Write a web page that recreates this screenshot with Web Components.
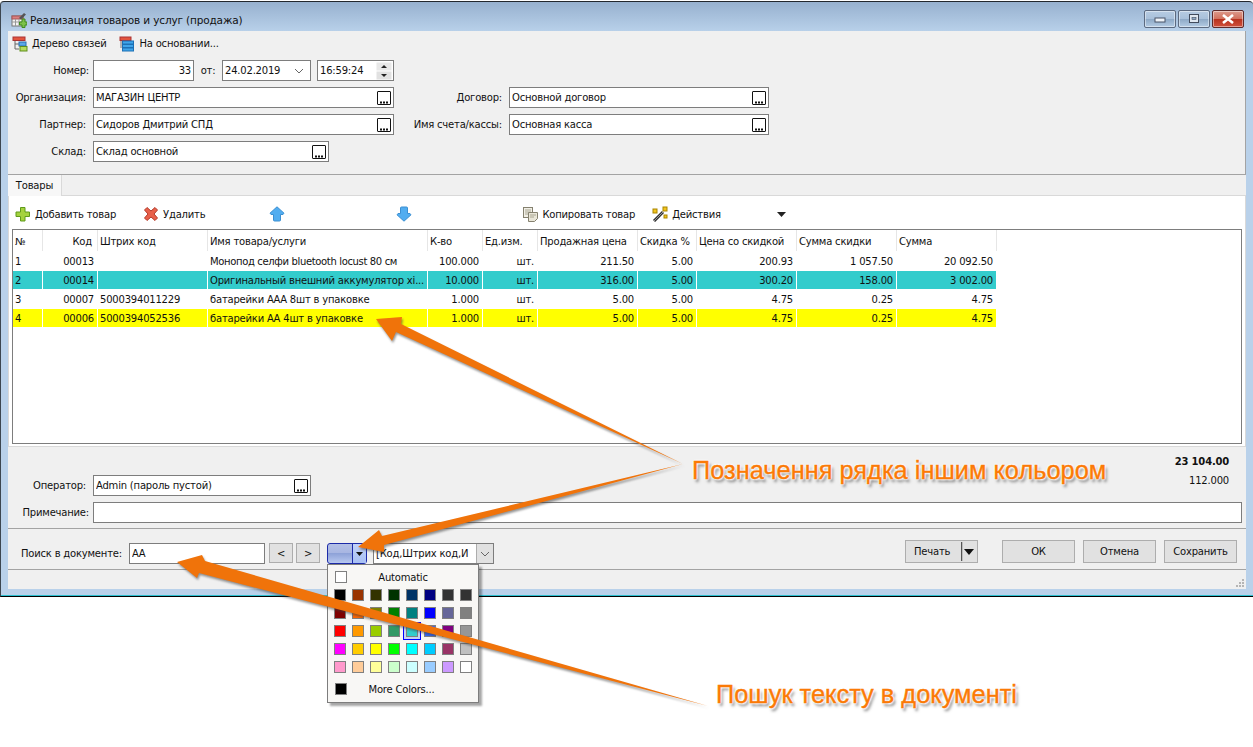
<!DOCTYPE html>
<html lang="ru">
<head>
<meta charset="utf-8">
<title>Реализация товаров и услуг</title>
<style>
	html, body { margin: 0; background: #fff; }
	body { font: 10px "DejaVu Sans", sans-serif; letter-spacing: -.2px; color: #111; }
</style>
</head>
<body>
<app-window></app-window>
<script>
const ICONS = {
	doc: `<rect x="1" y="4" width="11" height="10" fill="#f4f4f4" stroke="#777"/><rect x="1" y="4" width="11" height="3" fill="#d98080" stroke="#a55"/><path d="M1 10h11M4.500 7v7M8 7v7" stroke="#999"/><path d="M8 6l5-5 2 1.500-5 5z" fill="#555"/><path d="M11 7h3v3h2v3h-2v2.500h-3V13H8.500v-3H11z" fill="#7cc04a" stroke="#3f8a1c"/>`,
	tree: `<rect x="1" y="1" width="12" height="3.500" fill="#e2543e" stroke="#a33"/><path d="M3 5v8h4M3 8h4" stroke="#666" fill="none"/><rect x="7" y="6" width="7" height="4" fill="#5ba8e6" stroke="#2a6fb0"/><rect x="8" y="10.500" width="7" height="4.500" fill="#b6dc5c" stroke="#5f8e1d"/>`,
	stack: `<rect x="1" y="1" width="11" height="3.500" fill="#e2543e" stroke="#a33"/><path d="M2 5v7" stroke="#777"/><rect x="3.500" y="5" width="11" height="3" fill="#3fa5ea" stroke="#1d70b5"/><rect x="3.500" y="8.500" width="11" height="3" fill="#3fa5ea" stroke="#1d70b5"/><rect x="3.500" y="12" width="11" height="3" fill="#3fa5ea" stroke="#1d70b5"/>`,
	plus: `<path d="M5.500 1.500h4.500v4.500h4.500v4.500H10V15H5.500v-4.500H1V6h4.500z" fill="#a4d23e" stroke="#5f9a1a"/>`,
	cross: `<path d="M1.500 4L4 1.500 8 5l4-3.500L14.500 4 11 8l3.500 4-2.500 2.500L8 11l-4 3.500L1.500 12 5 8z" fill="#e8604a" stroke="#b33a2a"/>`,
	up: `<path d="M8 .8L15 7.200 14 8.500H11.500V14a1 1 0 0 1-1 1h-5a1 1 0 0 1-1-1V8.500H2L1 7.200z" fill="#52adf0" stroke="#3b8fd2"/>`,
	down: `<path d="M8 15.200L15 8.800 14 7.500H11.500V2a1 1 0 0 0-1-1h-5a1 1 0 0 0-1 1V7.500H2L1 8.800z" fill="#52adf0" stroke="#3b8fd2"/>`,
	copy: `<rect x="1.500" y="1.500" width="9" height="10" fill="#f1efe6" stroke="#85816f"/><path d="M3 4h6M3 6h6M3 8h6" stroke="#a9a692"/><path d="M6.500 6.500h9v6l-3 3h-6z" fill="#e9e6d8" stroke="#85816f"/><path d="M8 9h6M8 11h4" stroke="#a9a692"/>`,
	wand: `<path d="M2 15L11 6" stroke="#333" stroke-width="3"/><path d="M2 15L11 6" stroke="#999" stroke-width="1"/><rect x="1" y="3" width="4" height="4" fill="#f3c41c" stroke="#a98500"/><rect x="11" y="1" width="4" height="4" fill="#f3c41c" stroke="#a98500"/><rect x="12" y="9" width="3" height="3" fill="#f3c41c" stroke="#a98500"/>`
};

class XIcon extends HTMLElement {
	connectedCallback() {
		this.attachShadow({mode:'open'});
		this.shadowRoot.innerHTML = `
			<style>
			:host { display: block; width: 16px; height: 16px; flex: none; }
			svg { display: block; }
			</style>
			<svg width="16" height="16" viewBox="0 0 16 16">${ICONS[this.getAttribute('name')]}</svg>
		`;
	}
}

class TitleBar extends HTMLElement {
	constructor() {
		super();
		this.attachShadow({mode:'open'});
		this.shadowRoot.innerHTML = `
			<style>
			:host {
				display: flex;
				align-items: center;
				height: 29px;
				padding-left: 10px;
				font-size: 10.500px;
				letter-spacing: -.15px;
				color: #111;
			}
			x-icon { margin: 6px 3px 0 0; }
			.text { flex: 1; padding-top: 6px; }
			.btns { display: flex; gap: 2px; margin: 0 9px 0 0; align-self: flex-start; padding-top: 8px; }
			.btn {
				width: 30px;
				height: 16px;
				border: 1px solid #5c6a80;
				border-radius: 2px;
				background: linear-gradient(#b6cbe2 0, #a8c0da 50%, #8ea9c6 52%, #b4cce4 100%);
				box-shadow: inset 0 0 0 1px rgba(255,255,255,.45);
				display: flex;
				align-items: center;
				justify-content: center;
			}
			.btn.close {
				background: linear-gradient(#dc9a8c 0, #d2705c 50%, #b8321e 52%, #d0503c 100%);
				border-color: #5e2a2a;
			}
			</style>
			<x-icon name="doc"></x-icon>
			<span class="text">Реализация товаров и услуг (продажа)</span>
			<div class="btns">
				<div class="btn"><svg width="12" height="8"><rect x="1" y="3" width="10" height="4" fill="#eef3f8" stroke="#4a5568"/></svg></div>
				<div class="btn"><svg width="12" height="10"><rect x="1.500" y="0.500" width="9" height="8" fill="#dfe7f0" stroke="#414b5c"/><rect x="4" y="3.500" width="4" height="2" fill="#8ea9c6" stroke="#414b5c" stroke-width=".6"/></svg></div>
				<div class="btn close"><svg width="12" height="10"><path d="M1 1l10 8M11 1L1 9" stroke="#fff" stroke-width="2.600"/></svg></div>
			</div>
		`;
	}
}

class ToolBtn extends HTMLElement {
	constructor() {
		super();
		this.attachShadow({mode:'open'});
		this.shadowRoot.innerHTML = `
			<style>
			:host { display: inline-flex; align-items: center; gap: 4px; height: 17px; white-space: nowrap; }
			</style>
			<slot name="icon"></slot><slot></slot>
		`;
	}
}

class FieldBox extends HTMLElement {
	constructor() {
		super();
		this.attachShadow({mode:'open'});
		this.shadowRoot.innerHTML = `
			<style>
			:host {
				display: flex;
				align-items: center;
				box-sizing: border-box;
				height: 21px;
				background: #fff;
				border: 1px solid #7d7d7d;
				padding: 0 2px;
				overflow: hidden;
				white-space: nowrap;
				flex: none;
			}
			.text { flex: 1; overflow: hidden; }
			:host([right]) .text { text-align: right; }
			.dots {
				display: none;
				width: 12px;
				height: 12px;
				border: 1px solid #111;
				border-radius: 1px;
				position: relative;
			}
			:host([dots]) .dots { display: block; }
			.dots svg { display: block; }
			</style>
			<span class="text"><slot></slot></span>
			<slot name="after"></slot>
			<span class="dots"><svg width="12" height="12"><path d="M2 9.500h2v2H2zM5 9.500h2v2H5zM8 9.500h2v2H8z" fill="#111"/></svg></span>
		`;
	}
}

class TopForm extends HTMLElement {
	constructor() {
		super();
		this.attachShadow({mode:'open'});
		this.shadowRoot.innerHTML = `
			<style>
			:host {
				display: block;
				box-sizing: border-box;
				height: 144px;
				background: #f0f0f0;
				border-right: 1px solid #a3a3a3;
				border-bottom: 1px solid #a3a3a3;
				padding-top: 4px;
			}
			.tools { display: flex; gap: 13px; height: 17px; padding-left: 4px; margin-bottom: 8px; }
			.row { display: flex; align-items: center; height: 21px; margin-bottom: 6px; }
			.lab { width: 85px; box-sizing: border-box; padding-right: 7px; text-align: right; flex: none; white-space: nowrap; }
			.lab.n { padding-right: 4px; }
			.lab2 { width: 115px; }
			.ot { width: 28px; text-align: center; flex: none; }
			.chev { margin-right: 4px; flex: none; }
			.spin { margin-right: -1px; flex: none; display: block; }
			.gap { width: 6px; flex: none; }
			</style>
			<div class="tools">
				<tool-btn><x-icon slot="icon" name="tree"></x-icon>Дерево связей</tool-btn>
				<tool-btn><x-icon slot="icon" name="stack"></x-icon>На основании...</tool-btn>
			</div>
			<div class="row">
				<span class="lab n">Номер:</span>
				<field-box right style="width:101px">33</field-box>
				<span class="ot">от:</span>
				<field-box style="width:89px">24.02.2019<svg slot="after" class="chev" width="10" height="6"><path d="M1 1l4 4 4-4" fill="none" stroke="#666"/></svg></field-box>
				<span class="gap"></span>
				<field-box style="width:77px">16:59:24<svg slot="after" class="spin" width="16" height="18"><rect x="0.500" y="0.500" width="15" height="8" fill="#e8e8e8"/><rect x="0.500" y="9.500" width="15" height="8" fill="#e1e1e1"/><path d="M5 6l3-3 3 3z" fill="#222"/><path d="M5 12l3 3 3-3z" fill="#222"/></svg></field-box>
			</div>
			<div class="row">
				<span class="lab">Организация:</span>
				<field-box dots style="width:301px">МАГАЗИН ЦЕНТР</field-box>
				<span class="lab lab2">Договор:</span>
				<field-box dots style="width:260px">Основной договор</field-box>
			</div>
			<div class="row">
				<span class="lab">Партнер:</span>
				<field-box dots style="width:301px">Сидоров Дмитрий СПД</field-box>
				<span class="lab lab2">Имя счета/кассы:</span>
				<field-box dots style="width:260px">Основная касса</field-box>
			</div>
			<div class="row">
				<span class="lab">Склад:</span>
				<field-box dots style="width:236px">Склад основной</field-box>
			</div>
		`;
	}
}

const COLS = [
	{w:30, t:'№'},
	{w:55, t:'Код', r:1},
	{w:110, t:'Штрих код'},
	{w:220, t:'Имя товара/услуги'},
	{w:55, t:'К-во'},
	{w:55, t:'Ед.изм.'},
	{w:100, t:'Продажная цена'},
	{w:59, t:'Скидка %'},
	{w:100, t:'Цена со скидкой'},
	{w:100, t:'Сумма скидки'},
	{w:100, t:'Сумма'}
];
const ROWS = [
	{c:'', d:['1','00013','','<span style="letter-spacing:-.35px">Монопод селфи bluetooth locust 80 см</span>','100.000','шт.','211.50','5.00','200.93','1 057.50','20 092.50']},
	{c:'#33cccc', d:['2','00014','','Оригинальный внешний аккумулятор xi...','10.000','шт.','316.00','5.00','300.20','158.00','3 002.00']},
	{c:'', d:['3','00007','5000394011229','батарейки ААА 8шт в упаковке','1.000','шт.','5.00','5.00','4.75','0.25','4.75']},
	{c:'#ffff00', d:['4','00006','5000394052536','батарейки АА 4шт в упаковке','1.000','шт.','5.00','5.00','4.75','0.25','4.75']}
];

class DataGrid extends HTMLElement {
	constructor() {
		super();
		this.attachShadow({mode:'open'});
		const tpl = COLS.map(c => c.w + 'px').join(' ');
		const left = [0, 2, 3];
		const head = COLS.map(c => `<div class="h${c.r ? ' r' : ''}">${c.t}</div>`).join('');
		const body = ROWS.map(row => row.d.map((v, i) =>
			`<div class="c${left.includes(i) ? '' : ' r'}" style="${row.c ? 'background:' + row.c : ''}">${v}</div>`
		).join('')).join('');
		this.shadowRoot.innerHTML = `
			<style>
			:host {
				display: block;
				box-sizing: border-box;
				height: 215px;
				margin: 0 3px 3px;
				background: #fff;
				border: 1px solid #7d7d7d;
				overflow: hidden;
			}
			.grid { display: grid; grid-template-columns: ${tpl}; grid-auto-rows: 18px; row-gap: 1px; width: max-content; }
			.h, .c {
				box-sizing: border-box;
				border-right: 1px solid #fff;
				padding: 0 2px;
				display: flex;
				align-items: center;
				white-space: nowrap;
				overflow: hidden;
			}
			.h { height: 21px; padding-top: 2px; border-right: 1px solid #e6e6e6; }
			.h.r { justify-content: flex-end; padding-right: 5px; }
			.c { padding-right: 3px; }
			.c.r { justify-content: flex-end; }
			.head { display: grid; grid-template-columns: ${tpl}; width: max-content; height: 22px; }
			</style>
			<div class="head">${head}</div>
			<div class="grid">${body}</div>
		`;
	}
}

class GoodsTabs extends HTMLElement {
	constructor() {
		super();
		this.attachShadow({mode:'open'});
		this.shadowRoot.innerHTML = `
			<style>
			:host { display: block; background: #f0f0f0; }
			.strip { height: 20px; display: flex; }
			.tab {
				width: 54px;
				box-sizing: border-box;
				height: 21px;
				background: #f7f7f7;
				border-right: 1px solid #d9d9d9;
				display: flex;
				align-items: center;
				justify-content: center;
				position: relative;
				z-index: 1;
			}
			.page { background: #fff; border: 1px solid #d9d9d9; height: 252px; box-sizing: border-box; }
			.tools { display: flex; align-items: center; box-sizing: border-box; height: 33px; padding: 3px 0 0 6px; }
			.tri { margin-left: 56px; flex: none; }
			</style>
			<div class="strip"><div class="tab">Товары</div></div>
			<div class="page">
				<div class="tools">
					<tool-btn><x-icon slot="icon" name="plus"></x-icon>Добавить товар</tool-btn>
					<tool-btn style="margin-left:27px"><x-icon slot="icon" name="cross"></x-icon>Удалить</tool-btn>
					<tool-btn style="margin-left:64px"><x-icon slot="icon" name="up"></x-icon></tool-btn>
					<tool-btn style="margin-left:111px"><x-icon slot="icon" name="down"></x-icon></tool-btn>
					<tool-btn style="margin-left:110px"><x-icon slot="icon" name="copy"></x-icon>Копировать товар</tool-btn>
					<tool-btn style="margin-left:17px"><x-icon slot="icon" name="wand"></x-icon>Действия</tool-btn>
					<svg class="tri" width="9" height="5"><path d="M0 0h9L4.500 5z" fill="#222"/></svg>
				</div>
				<data-grid></data-grid>
			</div>
		`;
	}
}

class BottomForm extends HTMLElement {
	constructor() {
		super();
		this.attachShadow({mode:'open'});
		this.shadowRoot.innerHTML = `
			<style>
			:host {
				display: block;
				box-sizing: border-box;
				height: 82px;
				padding-top: 6px;
				background: #f0f0f0;
				border-bottom: 1px solid #a3a3a3;
			}
			.a { display: flex; align-items: flex-end; height: 43px; margin-bottom: 6px; }
			.lab { width: 85px; box-sizing: border-box; padding-right: 4px; text-align: right; height: 21px; line-height: 21px; flex: none; }
			.tot { margin: 0 17px 6px auto; text-align: right; }
			.tot div { height: 19px; line-height: 19px; }
			.b { display: flex; align-items: center; }
			</style>
			<div class="a">
				<span class="lab" style="padding-right:7px">Оператор:</span>
				<field-box dots style="width:218px">Admin (пароль пустой)</field-box>
				<div class="tot"><div><b>23 104.00</b></div><div>112.000</div></div>
			</div>
			<div class="b">
				<span class="lab">Примечание:</span>
				<field-box style="width:1149px"></field-box>
			</div>
		`;
	}
}

class ColorMenu extends HTMLElement {
	constructor() {
		super();
		this.attachShadow({mode:'open'});
		const colors = [
			'#000000','#993300','#333300','#003300','#003366','#000080','#333333','#333333',
			'#800000','#ff6600','#808000','#008000','#008080','#0000ff','#666699','#808080',
			'#ff0000','#ff9900','#99cc00','#339966','#33cccc','#3366ff','#800080','#969696',
			'#ff00ff','#ffcc00','#ffff00','#00ff00','#00ffff','#00ccff','#993366','#c0c0c0',
			'#ff99cc','#ffcc99','#ffff99','#ccffcc','#ccffff','#99ccff','#cc99ff','#ffffff'
		];
		const cells = colors.map((c, i) =>
			`<div class="cell${i == 20 ? ' sel' : ''}"><span class="sw" style="background:${c}"></span></div>`
		).join('');
		this.shadowRoot.innerHTML = `
			<style>
			:host {
				display: block;
				position: absolute;
				left: 327px;
				top: 564px;
				width: 152px;
				height: 139px;
				box-sizing: border-box;
				background: #f8f7f5;
				border: 1px solid #7d7d7d;
				box-shadow: 3px 3px 2px rgba(0,0,0,.35);
				z-index: 5;
			}
			.line { display: grid; grid-template-columns: 19px 1fr 26px; align-items: center; padding-left: 7px; }
			.line span:nth-child(2) { text-align: center; }
			.auto { height: 18px; padding-top: 3px; }
			.more { height: 26px; }
			.more span:nth-child(2) { margin-left: -3px; }
			.sw { display: block; box-sizing: border-box; width: 12px; height: 12px; border: 1px solid #808080; }
			.grid { display: grid; grid-template-columns: repeat(8, 18px); grid-auto-rows: 18px; padding-left: 3px; }
			.cell { display: flex; align-items: center; justify-content: center; }
			.cell.sel { border: 1px solid #0000ff; background: #c3d3f0; box-sizing: border-box; }
			</style>
			<div class="line auto"><span class="sw" style="background:#fff"></span><span>Automatic</span></div>
			<div class="grid">${cells}</div>
			<div class="line more"><span class="sw" style="background:#000"></span><span>More Colors...</span></div>
		`;
	}
}

class SearchBar extends HTMLElement {
	constructor() {
		super();
		this.attachShadow({mode:'open'});
		this.shadowRoot.innerHTML = `
			<style>
			:host {
				display: flex;
				align-items: flex-start;
				box-sizing: border-box;
				height: 41px;
				padding: 14px 9px 0 13px;
				background: #f0f0f0;
				border-bottom: 1px solid #a3a3a3;
			}
			.lab { width: 108px; height: 21px; line-height: 21px; flex: none; white-space: nowrap; }
			.b {
				box-sizing: border-box;
				height: 20px;
				background: #e1e1e1;
				border: 1px solid #adadad;
				display: flex;
				align-items: center;
				justify-content: center;
				flex: none;
			}
			.pick {
				display: flex;
				box-sizing: border-box;
				width: 40px;
				height: 21px;
				margin-left: 7px;
				border: 1px solid #1c2aa8;
				border-radius: 3px;
				background: linear-gradient(#b4c0e6, #a8b6e2 45%, #8ea2d8 50%, #b8c8f0);
				flex: none;
			}
			.pick i { flex: 1; }
			.pick u { width: 13px; border-left: 1px solid #1c2aa8; display: flex; align-items: center; justify-content: center; background: linear-gradient(#c2d2f8, #a8c0f4); }
			.combo { margin-left: 5px; padding: 0 0 0 2px; }
			.combo-end { width: 16px; height: 19px; background: #e1e1e1; border-left: 1px solid #adadad; display: flex; align-items: center; justify-content: center; flex: none; }
			.right { display: flex; gap: 8px; margin: -3px 0 0 auto; }
			.right .b { height: 23px; width: 73px; }
			.print { justify-content: flex-start !important; padding-left: 8px; }
			.print em { font-style: normal; flex: 1; }
			.print svg { flex: none; margin-right: 1px; }
			</style>
			<span class="lab">Поиск в документе:</span>
			<field-box style="width:136px">АА</field-box>
			<div class="b" style="width:24px;margin-left:4px">&lt;</div>
			<div class="b" style="width:24px;margin-left:3px">&gt;</div>
			<div class="pick"><i></i><u><svg width="7" height="4"><path d="M0 0h7L3.500 4z" fill="#111"/></svg></u></div>
			<field-box class="combo" style="width:121px;margin-left:6px">[Код,Штрих код,И<span slot="after" class="combo-end"><svg width="10" height="6"><path d="M1 1l4 4 4-4" fill="none" stroke="#666"/></svg></span></field-box>
			<div class="right">
				<div class="b print" style="margin-right:16px"><em>Печать</em><svg width="15" height="19"><path d="M0.500 0v19" stroke="#555" stroke-width="1.500"/><path d="M3 7h10l-5 6z" fill="#111"/></svg></div>
				<div class="b">ОК</div>
				<div class="b">Отмена</div>
				<div class="b">Сохранить</div>
			</div>
		`;
	}
}

class StatusStrip extends HTMLElement {
	constructor() {
		super();
		this.attachShadow({mode:'open'});
		this.shadowRoot.innerHTML = `
			<style>
			:host { display: flex; justify-content: flex-end; align-items: flex-end; height: 18px; background: #f0f0f0; padding: 0 1px 1px 0; }
			</style>
			<svg width="9" height="9"><path d="M6 0h2v2H6zM3 3h2v2H3zM6 3h2v2H6zM0 6h2v2H0zM3 6h2v2H3zM6 6h2v2H6z" fill="#b5b5b5"/></svg>
		`;
	}
}

class NoteLayer extends HTMLElement {
	constructor() {
		super();
		this.attachShadow({mode:'open'});
		this.shadowRoot.innerHTML = `
			<style>
			:host { display: block; position: absolute; left: 0; top: 0; width: 1253px; height: 747px; z-index: 9; pointer-events: none; }
			svg { position: absolute; left: 0; top: 0; filter: drop-shadow(1px 2px 1px rgba(60,60,60,.55)); }
			span {
				position: absolute;
				font: 25.400px "Liberation Sans", sans-serif;
				letter-spacing: 0;
				color: #fb7a06;
				-webkit-text-stroke: .4px #fb7a06;
				white-space: nowrap;
				text-shadow: 0 0 1px #fff, 0 0 2px #fff, 0 0 2px #fff, 0 0 3px #fff, 0 0 3px #fff, 2px 3px 3px rgba(0,0,0,.5);
			}
			</style>
			<svg width="1253" height="747">
				<g fill="#f0730a">
					<polygon points="376,319 402,317 401,324 683,464 396,332 392,341"/>
					<polygon points="358,547 379,530 382,536 683,464 384,545 384,552"/>
					<polygon points="177,562 202,555 205,561 708,706 199,573 197,578"/>
				</g>
			</svg>
			<span style="left:692px;top:456px">Позначення рядка іншим кольором</span>
			<span style="left:716px;top:680px">Пошук тексту в документі</span>
		`;
	}
}

class AppWindow extends HTMLElement {
	constructor() {
		super();
		this.attachShadow({mode:'open'});
		this.shadowRoot.innerHTML = `
			<style>
			:host {
				display: block;
				position: relative;
				width: 1253px;
				height: 747px;
				overflow: hidden;
			}
			.frame {
				box-sizing: border-box;
				height: 596px;
				position: relative;
				top: 1px;
				border-top: 1px solid #23282e;
				border-left: 1px solid #3c4650;
				border-bottom: 1px solid #000;
				border-radius: 4px 4px 0 0;
				background: linear-gradient(#97b1cf 0, #b9d1ea 30px, #b9d1ea 100%);
				box-shadow: inset 0 -1px 0 #2cc0d0;
			}
			.body { margin: 0 7px 0 7px; }
			</style>
			<div class="frame">
				<title-bar></title-bar>
				<div class="body">
					<top-form></top-form>
					<goods-tabs></goods-tabs>
					<bottom-form></bottom-form>
					<search-bar></search-bar>
					<status-strip></status-strip>
				</div>
			</div>
			<color-menu></color-menu>
			<note-layer></note-layer>
		`;
	}
}

customElements.define('x-icon', XIcon);
customElements.define('title-bar', TitleBar);
customElements.define('tool-btn', ToolBtn);
customElements.define('field-box', FieldBox);
customElements.define('top-form', TopForm);
customElements.define('data-grid', DataGrid);
customElements.define('goods-tabs', GoodsTabs);
customElements.define('bottom-form', BottomForm);
customElements.define('color-menu', ColorMenu);
customElements.define('search-bar', SearchBar);
customElements.define('status-strip', StatusStrip);
customElements.define('note-layer', NoteLayer);
customElements.define('app-window', AppWindow);
</script>
</body>
</html>
